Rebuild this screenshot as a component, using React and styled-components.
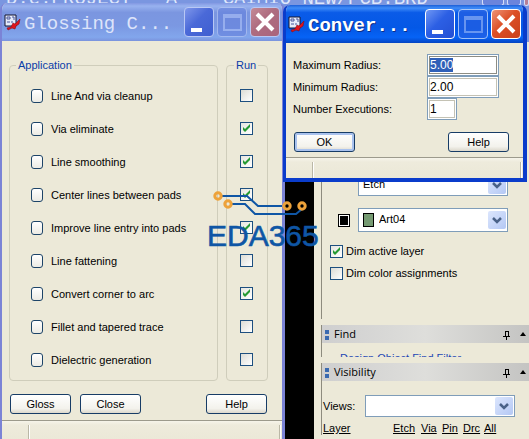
import styled, { createGlobalStyle, css } from "styled-components";

const GlobalStyle = createGlobalStyle`
  * {
    box-sizing: border-box;
  }

  body {
    margin: 0;
    background: #000;
    color: #000;
    font: 11px/14px "Liberation Sans", Arial, sans-serif;
  }

  button, input, select {
    font: inherit;
    color: inherit;
    margin: 0;
  }
`;

const Desktop = styled.div`
  position: relative;
  display: flex;
  flex-direction: column;
  height: 100vh;
  overflow: hidden;
`;

const ParentBar = styled.header`
  display: flex;
  justify-content: space-between;
  flex: none;
  height: 42px;
  padding-left: 6px;
  background: #7a96e0;
`;

const ParentTitle = styled.span`
  height: 9px;
  overflow: hidden;
  white-space: pre;
  color: #dfe7fb;
  font: 19px/20px "Liberation Mono", monospace;
  display: flex;
  align-items: flex-end;
`;

const ParentButtons = styled.div`
  display: flex;
  gap: 3px;
  height: 6px;
`;

const ParentButton = styled.span`
  width: ${(p) => p.$width}px;
  border: solid #d5defa;
  border-width: 0 1px 1px;
  border-radius: 0 0 3px 3px;
  background: ${(p) => (p.$close ? "#b77f96" : "#6a84dc")};
`;

const Workspace = styled.div`
  display: flex;
  flex: 1;
  min-height: 0;
  justify-content: flex-end;
`;

/* windows */

const Window = styled.section`
  position: absolute;
  display: flex;
  flex-direction: column;
  overflow: hidden;
  background: #ece9d8;
  border-radius: 7px 7px 0 0;
`;

const GlossingWindow = styled(Window)`
  top: 3px;
  left: 0;
  bottom: 0;
  width: 285px;
  border: solid #7b83d6;
  border-width: 0 3px 0 2px;
`;

const ConvertWindow = styled(Window)`
  top: 5px;
  left: 283px;
  width: 244px;
  border: solid #0a3ccb;
  border-width: 0 4px 4px 3px;
`;

const TitleBar = styled.header`
  display: flex;
  align-items: center;
  flex: none;
  gap: 3px;
  height: 38px;
  padding: 0 2px;
  color: #fff;

  svg {
    flex: none;
  }

  ${(p) =>
    p.$active
      ? css`
          background: linear-gradient(
            #1b5fd8,
            #3f8cf8 8%,
            #0a5be8 20%,
            #0458e6 60%,
            #0663f6 85%,
            #0344c2
          );
          text-shadow: 1px 1px #0c2f8a;
          font-weight: bold;
        `
      : css`
          background: linear-gradient(
            #8298e2,
            #98b2ef 8%,
            #7b96e0 25%,
            #7b98e2 60%,
            #82a6ec 90%,
            #7a93dd
          );
          color: #dde4fa;
        `}
`;

const Title = styled.h1`
  flex: 1;
  min-width: 0;
  margin: 0;
  padding-top: 4px;
  white-space: nowrap;
  font-family: "Liberation Mono", monospace;
  font-size: 19px;
  font-weight: inherit;
  line-height: 24px;
`;

const CaptionButton = styled.button`
  flex: none;
  width: 30px;
  height: 30px;
  padding: 0;
  border: 1px solid ${(p) => (p.$active ? "#fff" : "#b9c8f4")};
  border-radius: 4px;
  background: ${(p) => {
    if (p.$kind === "close") {
      return p.$active
        ? "linear-gradient(135deg, #ee9478, #dc4f26 45%, #c9401a)"
        : "linear-gradient(135deg, #c48a96, #ae6c80 45%, #a9647c)";
    }
    if (p.$kind === "max") {
      return p.$active ? "#2a62e2" : "#6480dc";
    }
    return p.$active
      ? "linear-gradient(135deg, #6f97f4, #2c5fe4 45%, #2350d4)"
      : "linear-gradient(135deg, #7f97ea, #4a69d8 45%, #3f5fd0)";
  }};
  opacity: ${(p) => (p.$kind === "max" ? 0.6 : 1)};

  svg {
    display: block;
  }
`;

const StatusBar = styled.footer`
  flex: none;
  height: 21px;
  border-top: 1px solid #9c9a8c;
  background: linear-gradient(#f6f4ea, #eeebdc 4px, #ebe8d7);
  padding: 4px 2px 0 0;
  display: flex;
`;

const StatusCell = styled.div`
  width: ${(p) => p.$width || "auto"};
  flex: ${(p) => (p.$width ? "none" : 1)};
  border-right: 1px solid #bab7a6;
  box-shadow: 1px 0 #fff;
`;

const PushButton = styled.button`
  width: 61px;
  height: 20px;
  padding: 0;
  border: 1px solid #173c66;
  border-radius: 3px;
  background: linear-gradient(#fff, #f3f2ec 75%, #dcd8cc);
  ${(p) => p.$default && "box-shadow: inset 0 0 0 2px #a9c2ee;"}
`;

const CheckBox = styled.input.attrs({ type: "checkbox" })`
  appearance: none;
  flex: none;
  width: 13px;
  height: 13px;
  border: 1px solid #1d4f7f;
  background: linear-gradient(135deg, #dcdcd5, #fff);

  &:checked {
    background: url("data:image/svg+xml,%3Csvg xmlns='http://www.w3.org/2000/svg' width='11' height='11'%3E%3Cpath d='M2 4v3l2 2 5-5V1L4 6z' fill='%23259a33'/%3E%3C/svg%3E"),
      linear-gradient(135deg, #e6e6e0, #fff);
  }
`;

/* glossing controller */

const GlossBody = styled.form`
  flex: 1;
  padding: 17px 14px 6px 7px;
`;

const Groups = styled.div`
  display: grid;
  grid-template-columns: 1fr 42px;
  gap: 8px;
`;

const Group = styled.fieldset`
  min-width: 0;
  margin: 0;
  padding: 7px ${(p) => p.$pad}px 4px;
  border: 1px solid #cfcdbb;
  border-radius: 4px;

  legend {
    padding: 0 2px;
    margin-left: ${(p) => p.$legend}px;
    color: #0a3ca8;
  }
`;

const Row = styled.div`
  display: flex;
  align-items: center;
  gap: 8px;
  height: 33px;
`;

const DetailButton = styled.button`
  width: 12px;
  height: 14px;
  padding: 0;
  border: 1px solid #1d4468;
  border-radius: 3px;
  background: linear-gradient(#fff, #ecebe4);
`;

const ButtonRow = styled.div`
  display: flex;
  gap: 9px;
  padding: ${(p) => p.$padding};

  button:last-child {
    margin-left: auto;
  }
`;

/* convert corner dialog */

const Fields = styled.div`
  display: grid;
  grid-template-columns: 134px 1fr;
  align-items: center;
  padding: 11px 6px 0 7px;
`;

const TextBox = styled.input`
  width: ${(p) => p.$width}px;
  height: 22px;
  padding: 0 2px;
  border: 1px solid #7f9db9;
  outline: 1px solid #c4c2b4;
  outline-offset: -3px;
  background: #fff;
  font-size: 12px;

  &:focus {
    outline: 1px solid #8d8d84;
    outline-offset: -3px;
  }

  &::selection {
    background: #2f60b8;
    color: #fff;
  }
`;

/* docked panels */

const SidePanel = styled.aside`
  width: calc(100% - 314px);
  display: flex;
  flex-direction: column;
  gap: 6px;
  padding-left: 7px;
  background: #ece9d8;
`;

const Pane = styled.section`
  flex: none;
  border-left: 1px solid #8d8b7e;
  overflow: hidden;
`;

const OptionsPane = styled(Pane)`
  height: 277px;
  display: flex;
  flex-direction: column;
  justify-content: flex-end;
  padding: 0 21px 35px 8px;
`;

const FindPane = styled(Pane)`
  height: 32px;
`;

const LayerRows = styled.div`
  display: grid;
  gap: 12px;
  margin-bottom: 8px;
`;

const LayerRow = styled.div`
  display: flex;
  align-items: center;
  justify-content: flex-end;
  gap: 8px;
`;

const ActiveLayer = styled.button`
  width: 12px;
  height: 13px;
  padding: 0;
  border: 1px solid #000;
  background: #000;
  box-shadow: inset 0 0 0 1px #fff;
`;

const SelectBox = styled.div`
  display: grid;
  align-items: center;
  flex: none;
  width: 150px;

  > * {
    grid-area: 1 / 1;
  }
`;

const Select = styled.select`
  appearance: none;
  width: 100%;
  height: ${(p) => p.$height}px;
  padding: 0 20px 2px ${(p) => p.$indent}px;
  border: 1px solid #7f9db9;
  border-radius: 0;
  background: #fff;
`;

const Arrow = styled.span`
  justify-self: end;
  width: 18px;
  height: 18px;
  margin-right: 2px;
  border-radius: 2px;
  background: linear-gradient(135deg, #dce6fd, #b4c8f4);
  pointer-events: none;

  svg {
    display: block;
  }
`;

const Swatch = styled.span`
  width: 11px;
  height: 14px;
  margin-left: 5px;
  border: 1px solid #000;
  background: #759a72;
  pointer-events: none;
`;

const CheckLabel = styled.label`
  display: flex;
  align-items: center;
  gap: 3px;
  height: 22px;
`;

const PaneHeader = styled.h2`
  display: flex;
  align-items: center;
  gap: 5px;
  height: 18px;
  margin: 0;
  padding: 0 2px 0 3px;
  background: linear-gradient(90deg, #cfcfcf, #dededb 50%, #c4c4c2);
  font: 11px/16px "Open Sans", "Noto Sans", sans-serif;

  svg {
    flex: none;
  }
`;

const PaneTitle = styled.span`
  flex: 1;
`;

const FilterGroup = styled.fieldset`
  margin: 8px 12px 0 9px;
  padding: 0;
  height: 60px;
  border: 1px solid #cfcdbb;

  legend {
    margin-left: 5px;
    padding: 0 3px;
    color: #1b46b4;
  }
`;

const ViewRow = styled.div`
  display: flex;
  align-items: center;
  gap: 8px;
  padding: 14px 14px 4px 1px;
  justify-content: space-between;
`;

const LayerTable = styled.table`
  border-collapse: collapse;
  table-layout: fixed;

  th {
    padding: 0 0 0 1px;
    width: 21px;
    font-weight: normal;
    text-align: left;
    text-decoration: underline;
  }

  th:first-child {
    width: 70px;
  }

  th:nth-child(2) {
    width: 28px;
  }
`;

const Watermark = styled.svg`
  position: absolute;
  top: 186px;
  left: 204px;
  pointer-events: none;
`;

const steps = [
  { name: "Line And via cleanup", run: false },
  { name: "Via eliminate", run: true },
  { name: "Line smoothing", run: true },
  { name: "Center lines between pads", run: true },
  { name: "Improve line entry into pads", run: true },
  { name: "Line fattening", run: false },
  { name: "Convert corner to arc", run: true },
  { name: "Fillet and tapered trace", run: false },
  { name: "Dielectric generation", run: false },
];

const AppIcon = () => (
  <svg width="17" height="17" viewBox="0 0 17 17">
    <path d="M1 1h11v11H1z" fill="#e6ebfb" stroke="#15152e" />
    <path d="M3 3h3v2H3zM8 3h2v3M3 8h3M7 8h2" fill="none" stroke="#4a5698" />
    <path d="M3 14l4-1 2-4 2 1 5-5-1 5-3 2-1 3-3-1-4 2z" fill="#e0141c" stroke="#8e0c14" strokeWidth="0.6" />
  </svg>
);

const glyphs = {
  min: <path d="M6 20h11v4H6z" fill="#fff" />,
  max: <path d="M6 7h17v15H6zM6 9h17" fill="none" stroke="#a9bdf6" strokeWidth="2" />,
  close: <path d="M6 6l16 16M22 6L6 22" stroke="#fff" strokeWidth="4" />,
};

const captions = { min: "Minimize", max: "Maximize", close: "Close window" };

const Caption = ({ title, active }) => (
  <TitleBar $active={active}>
    <AppIcon />
    <Title>{title}</Title>
    {Object.keys(glyphs).map((kind) => (
      <CaptionButton key={kind} type="button" aria-label={captions[kind]} $kind={kind} $active={active}>
        <svg width="28" height="28">{glyphs[kind]}</svg>
      </CaptionButton>
    ))}
  </TitleBar>
);

const Combo = ({ id, label, value, height = 22, indent = 4, children }) => (
  <SelectBox>
    <Select id={id} aria-label={label} $height={height} $indent={indent}>
      <option>{value}</option>
    </Select>
    {children}
    <Arrow>
      <svg width="18" height="18">
        <path d="M5 7l4 4 4-4" fill="none" stroke="#4a6288" strokeWidth="2.5" />
      </svg>
    </Arrow>
  </SelectBox>
);

const PanelTitle = ({ children }) => (
  <PaneHeader>
    <svg width="4" height="11">
      <path d="M0 1h4v4H0zM0 7h4v4H0z" fill="#3a6ab0" />
    </svg>
    <PaneTitle>{children}</PaneTitle>
    <svg width="24" height="12">
      <path d="M2 3.500h4M2.500 3v5M5.500 3v5M0 8.500h7M3.500 9v3" fill="none" stroke="#000" />
      <path d="M17 8l3-4 3 4z" />
    </svg>
  </PaneHeader>
);

const Glossing = () => (
  <GlossingWindow>
    <Caption title="Glossing C..." />
    <GlossBody>
      <Groups>
        <Group $pad={21} $legend={-15}>
          <legend>Application</legend>
          {steps.map(({ name }, i) => (
            <Row key={name}>
              <DetailButton id={`step-${i}`} type="button" />
              <label htmlFor={`step-${i}`}>{name}</label>
            </Row>
          ))}
        </Group>
        <Group $pad={13} $legend={-6}>
          <legend>Run</legend>
          {steps.map(({ name, run }) => (
            <Row key={name}>
              <CheckBox defaultChecked={run} aria-label={`Run ${name}`} />
            </Row>
          ))}
        </Group>
      </Groups>
      <ButtonRow $padding="13px 1px 0 1px">
        <PushButton type="button">Gloss</PushButton>
        <PushButton type="button">Close</PushButton>
        <PushButton type="button">Help</PushButton>
      </ButtonRow>
    </GlossBody>
    <StatusBar>
      <StatusCell $width="27px" />
      <StatusCell />
    </StatusBar>
  </GlossingWindow>
);

const ConvertCorner = () => (
  <ConvertWindow>
    <Caption title="Conver..." active />
    <form>
      <Fields>
        <label htmlFor="max-radius">Maximum Radius:</label>
        <TextBox
          id="max-radius"
          defaultValue="5.00"
          $width={72}
          autoFocus
          onFocus={(e) => e.target.select()}
        />
        <label htmlFor="min-radius">Minimum Radius:</label>
        <TextBox id="min-radius" defaultValue="2.00" $width={72} />
        <label htmlFor="executions">Number Executions:</label>
        <TextBox id="executions" defaultValue="1" $width={30} />
      </Fields>
      <ButtonRow $padding="12px 14px 5px 8px">
        <PushButton type="button" $default>OK</PushButton>
        <PushButton type="button">Help</PushButton>
      </ButtonRow>
    </form>
    <StatusBar>
      <StatusCell $width="27px" />
      <StatusCell />
    </StatusBar>
  </ConvertWindow>
);

const Docked = () => (
  <SidePanel>
    <OptionsPane>
      <LayerRows>
        <LayerRow>
          <Combo label="Class" value="Etch" />
        </LayerRow>
        <LayerRow>
          <ActiveLayer type="button" aria-label="Active layer" />
          <Combo label="Subclass" value="Art04" height={24} indent={20}>
            <Swatch />
          </Combo>
        </LayerRow>
      </LayerRows>
      <CheckLabel>
        <CheckBox defaultChecked />
        Dim active layer
      </CheckLabel>
      <CheckLabel>
        <CheckBox />
        Dim color assignments
      </CheckLabel>
    </OptionsPane>
    <FindPane>
      <PanelTitle>Find</PanelTitle>
      <FilterGroup>
        <legend>Design Object Find Filter</legend>
      </FilterGroup>
    </FindPane>
    <Pane>
      <PanelTitle>Visibility</PanelTitle>
      <ViewRow>
        <label htmlFor="views">Views:</label>
        <Combo id="views" value="" />
      </ViewRow>
      <LayerTable>
        <thead>
          <tr>
            {["Layer", "Etch", "Via", "Pin", "Drc", "All"].map((h) => (
              <th key={h}>{h}</th>
            ))}
          </tr>
        </thead>
      </LayerTable>
    </Pane>
  </SidePanel>
);

const Logo = () => (
  <Watermark width="120" height="66">
    <g fill="none" stroke="#0f56a5" strokeWidth="2">
      <path d="M18 10h25l11 10h24" />
      <path d="M28 18h13l10 10h41l6-5" />
    </g>
    <g fill="none" stroke="#eda23a" strokeWidth="3">
      <circle cx="14" cy="10" r="3.2" />
      <circle cx="24" cy="18" r="3.2" />
      <circle cx="83" cy="20" r="3.2" />
      <circle cx="98" cy="20" r="3.2" />
    </g>
    <text x="3" y="60" fontFamily="Liberation Sans, Arial, sans-serif" fontSize="30" fill="#0f56a5" stroke="#0f56a5" strokeWidth="0.6">
      EDA365
    </text>
  </Watermark>
);

const App = () => {
  return (
    <>
      <GlobalStyle />
      <Desktop>
        <ParentBar>
          <ParentTitle>{"D:e:PROJECT   A-   CAIMIO_NEW/PCB.BRD"}</ParentTitle>
          <ParentButtons>
            <ParentButton $width={22} />
            <ParentButton $width={14} />
            <ParentButton $width={5} $close />
          </ParentButtons>
        </ParentBar>
        <Workspace>
          <Docked />
        </Workspace>
        <Glossing />
        <ConvertCorner />
        <Logo />
      </Desktop>
    </>
  );
};

export default App;
